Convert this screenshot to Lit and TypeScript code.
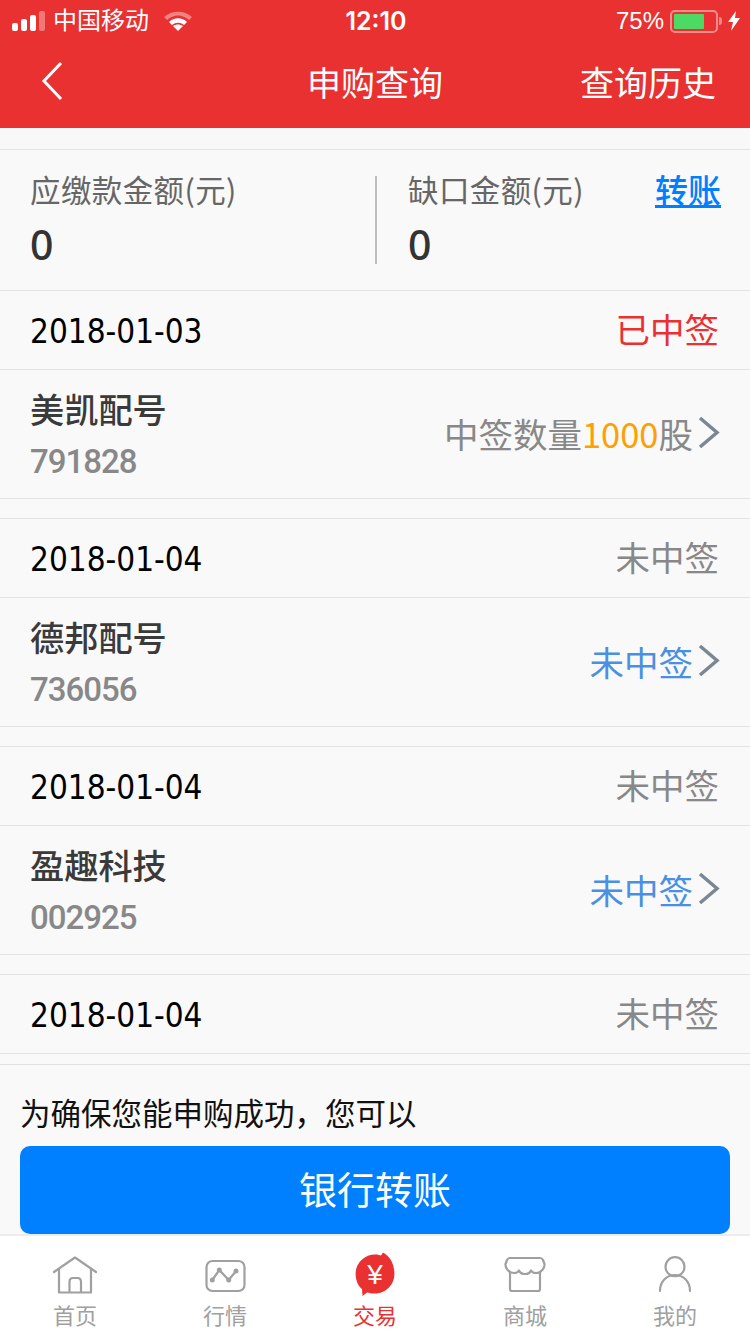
import { LitElement, html, css, svg, unsafeCSS, TemplateResult } from 'lit';
import { customElement } from 'lit/decorators.js';

const CJK = unsafeCSS(`'Noto Sans CJK SC', 'Noto Sans', sans-serif`);

type PurchaseRecord = {
  date: string;
  flag: string;
  won?: boolean;
  name?: string;
  code?: string;
  lots?: string;
};

const RECORDS: PurchaseRecord[] = [
  { date: '2018-01-03', flag: '已中签', won: true, name: '美凯配号', code: '791828', lots: '1000' },
  { date: '2018-01-04', flag: '未中签', name: '德邦配号', code: '736056' },
  { date: '2018-01-04', flag: '未中签', name: '盈趣科技', code: '002925' },
  { date: '2018-01-04', flag: '未中签' },
];

const TABS = [
  {
    label: '首页',
    icon: svg`<path d="M1 16 L22 1.5 L43 16" /><path d="M6 13 V36.5 H38 V13" /><path d="M16.5 36 V26 Q16.5 22 20 22 H24.5 Q28 22 28 26 V36" />`,
  },
  {
    label: '行情',
    icon: svg`<rect x="3.5" y="5" width="38" height="30" rx="6" /><path d="M9.3 24 L16.3 14 L25.7 24 L33 15" /><g class="dots"><circle cx="9.3" cy="24" r="2.5" /><circle cx="16.3" cy="14" r="2.5" /><circle cx="25.7" cy="24" r="2.5" /><circle cx="33" cy="15" r="2.5" /></g>`,
  },
  {
    label: '交易',
    active: true,
    icon: svg`<path class="badge" d="M30 -3.5 C37 0 41.4 8 41.4 18 C41.4 29 32.5 37.5 22 37.5 C19 37.5 16 37 14 36.5 L9.5 40 L9 33 C6 31 2.6 25 2.6 18 C2.6 7 11.5 -1.5 22 -1.5 C24.5 -1.5 26.5 -1 28 -0.5 Z" /><text class="yen" x="22" y="28">¥</text>`,
  },
  {
    label: '商城',
    icon: svg`<path d="M7 2 H37 Q39 2 40 4 L41.5 8 C42 12 38 17 33 17 C30 17 28.5 15.5 28 14.5 C27 17 24 18 22 18 C20 18 17 17 16 14.5 C15.5 15.5 14 17 11 17 C6 17 2 12 2.5 8 L4 4 Q5 2 7 2 Z" /><path d="M7 16 V33 Q7 35 9 35 H35 Q37 35 37 33 V16" />`,
  },
  {
    label: '我的',
    icon: svg`<circle cx="22" cy="10.7" r="9.5" /><path d="M7 35 C7 25 14 19 22 19 C30 19 37 25 37 35" />`,
  },
];

@customElement('app-root')
export class AppRoot extends LitElement {
  static styles = css`
    :host {
      display: block;
      width: 750px;
      height: 1334px;
      overflow: hidden;
      background: #f9f9f9;
      font-family: ${CJK};
      color: #333;
    }

    .page {
      height: 1334px;
      display: flex;
      flex-direction: column;
    }

    .head {
      height: 128px;
      flex: none;
      background: #e93131;
      color: #fff;
    }

    .status {
      height: 40px;
      padding: 2px 10px 0 12px;
      box-sizing: border-box;
      display: grid;
      grid-template-columns: 1fr auto 1fr;
      align-items: center;
      font-family: 'Liberation Sans', ${CJK};
    }

    .status-left {
      display: flex;
      align-items: center;
      gap: 8px;
      font-size: 24px;
      line-height: 38px;
    }

    .status-right {
      display: flex;
      align-items: center;
      justify-content: flex-end;
      gap: 6px;
      font-size: 24px;
    }

    .clock {
      font-family: Inter, 'Liberation Sans', sans-serif;
      font-size: 25px;
      font-weight: 600;
    }

    .bars {
      display: flex;
      align-items: flex-end;
      gap: 3px;
      height: 20px;
    }

    .bars i {
      width: 6px;
      border-radius: 2px;
      background: #fff;
    }

    .bars .b1 {
      height: 8px;
    }

    .bars .b2 {
      height: 12px;
    }

    .bars .b3 {
      height: 16px;
    }

    .bars .b4 {
      height: 20px;
      background: rgba(255, 255, 255, 0.35);
    }

    .wifi {
      margin-left: 6px;
    }

    .battery-wrap {
      display: flex;
      align-items: center;
      gap: 1px;
    }

    .battery {
      width: 48px;
      height: 23px;
      box-sizing: border-box;
      border: 2px solid rgba(255, 255, 255, 0.45);
      border-radius: 5px;
      padding: 2px;
      display: flex;
    }

    .battery i {
      width: 30px;
      background: #4cd964;
      border-radius: 1px;
    }

    .nub {
      width: 3px;
      height: 8px;
      border-radius: 0 3px 3px 0;
      background: rgba(255, 255, 255, 0.45);
    }

    .nav {
      height: 88px;
      box-sizing: border-box;
      display: grid;
      grid-template-columns: 1fr auto 1fr;
      align-items: center;
      padding: 0 34px 6px;
    }

    .back {
      margin-left: 8px;
    }

    .nav-title {
      font-size: 34px;
    }

    .nav-link {
      font-size: 34px;
      justify-self: end;
    }

    .icon {
      fill: none;
      stroke: currentColor;
      display: block;
      overflow: visible;
    }

    .gap {
      height: 21px;
      flex: none;
      background: #f8f8f8;
      border-bottom: 1px solid #e2e2e2;
    }

    .summary {
      flex: none;
      height: 141px;
      box-sizing: border-box;
      border-bottom: 1px solid #e2e2e2;
      display: grid;
      grid-template-columns: 1fr 1fr;
      align-items: center;
    }

    .sum-col {
      padding-left: 30px;
      height: 88px;
      position: relative;
      display: flex;
      flex-direction: column;
      gap: 22px;
    }

    .sum-col + .sum-col {
      border-left: 2px solid #bdbdbd;
      padding-left: 31px;
    }

    .sum-label {
      font-size: 30.5px;
      letter-spacing: 0.4px;
      line-height: 26px;
      color: #666;
    }

    .sum-value {
      font-size: 41px;
      line-height: 40px;
      font-weight: 500;
      color: #333;
      font-family: 'Noto Sans', sans-serif;
    }

    .transfer {
      position: absolute;
      right: 29px;
      top: -4px;
      font-size: 33px;
      line-height: 34px;
      font-weight: 500;
      color: #007fff;
      text-decoration: underline;
    }

    .record {
      flex: none;
      margin-bottom: 19px;
      border-bottom: 1px solid #e2e2e2;
    }

    .record:last-of-type {
      margin-bottom: 0;
    }

    .record + .record {
      border-top: 1px solid #e2e2e2;
    }

    .date-row {
      height: 78px;
      display: flex;
      align-items: center;
      justify-content: space-between;
      padding: 0 31px 0 30px;
      font-size: 34.5px;
      color: #888;
    }

    .date {
      font-family: 'DejaVu Sans Condensed', 'Liberation Sans Narrow', Roboto, sans-serif;
      color: #000;
      font-size: 33px;
      padding-top: 2px;
    }

    .flag {
      padding-bottom: 4px;
    }

    .flag.won {
      color: #e93131;
    }

    .detail {
      height: 129px;
      box-sizing: border-box;
      border-top: 1px solid #e2e2e2;
      display: flex;
      align-items: center;
      justify-content: space-between;
      padding: 0 31px 0 30px;
    }

    .info {
      padding-top: 1px;
    }

    .name {
      font-size: 34.2px;
      line-height: 40px;
      font-weight: 500;
      color: #3a3a3a;
    }

    .code {
      font-size: 33px;
      line-height: 40px;
      margin-top: 14px;
      letter-spacing: -1px;
      font-weight: 500;
      color: #888;
      font-family: Roboto, sans-serif;
    }

    .result {
      display: flex;
      align-items: center;
      gap: 5px;
      font-size: 34.5px;
      color: #888;
      padding-bottom: 3px;
    }

    .result.none {
      color: #4a90e2;
    }

    .result b {
      font-weight: 400;
      color: #ff9f00;
    }

    .chevron {
      color: #7b8794;
    }

    .notice {
      margin-top: 10px;
      border-top: 1px solid #e2e2e2;
      flex: 1;
      padding: 28px 20px 0;
      display: flex;
      flex-direction: column;
      min-height: 0;
    }

    .notice p {
      margin: 0 0 15px;
      font-size: 30.5px;
      line-height: 38px;
      color: #111;
    }

    .bank {
      height: 88px;
      box-sizing: border-box;
      padding-bottom: 5px;
      flex: none;
      border-radius: 10px;
      background: #007fff;
      color: #fff;
      font-size: 38px;
      display: flex;
      align-items: center;
      justify-content: center;
    }

    .tabs {
      flex: none;
      height: 100px;
      box-sizing: border-box;
      border-top: 2px solid #ececec;
      background: #fff;
      display: grid;
      grid-template-columns: repeat(5, 1fr);
    }

    .tab {
      display: flex;
      flex-direction: column;
      align-items: center;
      color: #a0a0a0;
      font-size: 22px;
      line-height: 28px;
      padding-top: 20px;
    }

    .tab svg {
      stroke-width: 2.2;
      stroke-linejoin: round;
      stroke-linecap: round;
      margin-bottom: 2px;
    }

    .tab.active {
      color: #e93131;
    }

    .dots {
      fill: #a0a0a0;
      stroke: none;
    }

    .badge {
      fill: #e93131;
      stroke: none;
    }

    .yen {
      fill: #fff;
      stroke: none;
      font-size: 28px;
      text-anchor: middle;
      font-family: 'Liberation Sans', sans-serif;
    }
  `;

  private renderChevron(): TemplateResult {
    return html`
      <svg class="icon chevron" width="21" height="33" viewBox="0 0 21 33" stroke-width="3.5">
        <path d="M2 2 L19 16.5 L2 31" />
      </svg>
    `;
  }

  private renderRecord(item: PurchaseRecord): TemplateResult {
    return html`
      <section class="record">
        <div class="date-row">
          <span class="date">${item.date}</span>
          <span class="flag ${item.won ? 'won' : ''}">${item.flag}</span>
        </div>
        ${item.name
          ? html`
              <div class="detail">
                <div class="info">
                  <div class="name">${item.name}</div>
                  <div class="code">${item.code}</div>
                </div>
                <div class="result ${item.lots ? '' : 'none'}">
                  <span>${item.lots ? html`中签数量<b>${item.lots}</b>股` : '未中签'}</span>
                  ${this.renderChevron()}
                </div>
              </div>
            `
          : ''}
      </section>
    `;
  }

  render(): TemplateResult {
    return html`
      <div class="page">
        <header class="head">
          <div class="status">
            <div class="status-left">
              <div class="bars">
                <i class="b1"></i>
                <i class="b2"></i>
                <i class="b3"></i>
                <i class="b4"></i>
              </div>
              <span>中国移动</span>
              <svg class="wifi" width="30" height="22" viewBox="0 0 30 22">
                <path d="M1 7 C9 0 21 0 29 7 L26 10 C19 4 11 4 4 10 Z" fill="#fff" opacity="0.4" />
                <path d="M6 12 C11 7 19 7 24 12 L21 15 C17 12 13 12 9 15 Z" fill="#fff" />
                <path d="M10 16 C13 14 17 14 20 16 L15 21 Z" fill="#fff" />
              </svg>
            </div>
            <div class="clock">12:10</div>
            <div class="status-right">
              <span>75%</span>
              <div class="battery-wrap">
                <div class="battery"><i></i></div>
                <div class="nub"></div>
              </div>
              <svg width="12" height="20" viewBox="0 0 12 20">
                <path d="M8 0 L0 11 H5 L3 20 L12 7 H7 Z" fill="#fff" />
              </svg>
            </div>
          </div>
          <nav class="nav">
            <svg class="icon back" width="24" height="40" viewBox="0 0 24 40" stroke-width="3">
              <path d="M19 2 L2 20 L19 38" />
            </svg>
            <div class="nav-title">申购查询</div>
            <div class="nav-link">查询历史</div>
          </nav>
        </header>
        <div class="gap"></div>
        <section class="summary">
          <div class="sum-col">
            <div class="sum-label">应缴款金额(元)</div>
            <div class="sum-value">0</div>
          </div>
          <div class="sum-col">
            <div class="sum-label">缺口金额(元)</div>
            <div class="sum-value">0</div>
            <div class="transfer">转账</div>
          </div>
        </section>
        ${RECORDS.map((r) => this.renderRecord(r))}
        <div class="notice">
          <p>为确保您能申购成功，您可以</p>
          <div class="bank">银行转账</div>
        </div>
        <footer class="tabs">
          ${TABS.map(
            (t) => html`
              <div class="tab ${t.active ? 'active' : ''}">
                <svg class="icon" width="44" height="42" viewBox="0 0 44 42">${t.icon}</svg>
                <span>${t.label}</span>
              </div>
            `
          )}
        </footer>
      </div>
    `;
  }
}
